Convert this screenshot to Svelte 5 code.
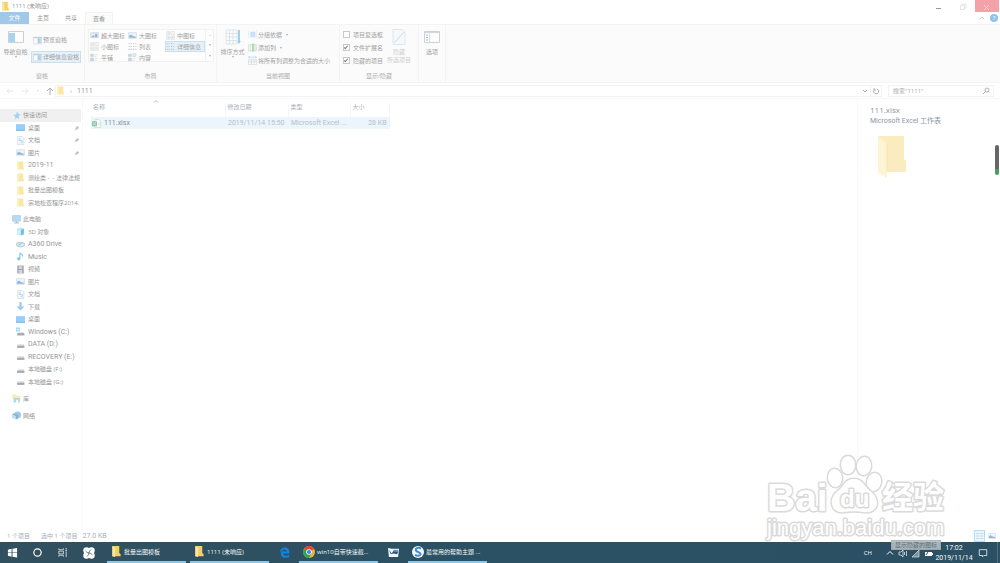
<script>
	let query = "";
	let activeTab = "查看";
	let showCheckboxes = false;
	let showExtensions = true;
	let showHidden = true;
	let selectedLayout = "详细信息";

	const tabs = ["主页", "共享", "查看"];

	const layouts = [
		{ name: "超大图标", icon: "large" },
		{ name: "大图标", icon: "photo" },
		{ name: "中图标", icon: "medium" },
		{ name: "小图标", icon: "small" },
		{ name: "列表", icon: "list" },
		{ name: "详细信息", icon: "details" },
		{ name: "平铺", icon: "tiles" },
		{ name: "内容", icon: "content" },
	];

	const quickAccess = [
		{ name: "桌面", icon: "desktop", pinned: true },
		{ name: "文档", icon: "doc", pinned: true },
		{ name: "图片", icon: "photo", pinned: true },
		{ name: "2019-11", icon: "folder", latin: true },
		{ name: "测绘类 -  - 法律法规", icon: "folder" },
		{ name: "批量出图模板", icon: "folder" },
		{ name: "宗地检查程序2014.", icon: "folder" },
	];

	const thisPc = [
		{ name: "3D 对象", icon: "cube" },
		{ name: "A360 Drive", icon: "cloud", latin: true },
		{ name: "Music", icon: "music", latin: true },
		{ name: "视频", icon: "video" },
		{ name: "图片", icon: "photo" },
		{ name: "文档", icon: "doc" },
		{ name: "下载", icon: "download" },
		{ name: "桌面", icon: "desktop" },
		{ name: "Windows (C:)", icon: "system", latin: true },
		{ name: "DATA (D:)", icon: "drive", latin: true },
		{ name: "RECOVERY (E:)", icon: "drive", latin: true },
		{ name: "本地磁盘 (F:)", icon: "drive" },
		{ name: "本地磁盘 (G:)", icon: "drive" },
	];
</script>

{#snippet icon(name)}
	<svg class="icon" viewBox="0 0 16 16" aria-hidden="true">
		{#if name === "folder"}
			<path d="M2 1h10l1 1v9l1 1v3H2z" fill="#fbe6a6" />
			<path d="M2 1l3 2v13l-3-1z" fill="#fdf0c4" />
		{:else if name === "folderStrong"}
			<path d="M2 0h10v10l2 2v3H2z" fill="#f5cf62" />
			<path d="M2 0l4 3v13l-4-1z" fill="#ffe9a0" />
		{:else if name === "star"}
			<path d="M9 1l2 4 4 1-3 3 1 5-4-2-4 3 1-5-4-3 5-1z" fill="#a3d3f5" />
		{:else if name === "desktop"}
			<path d="M0 2h16v12H0z" fill="#96d0f8" />
			<path d="M0 12h16v2H0z" fill="#7fbfec" />
		{:else if name === "doc"}
			<path d="M3 1h8l3 3v11H3z" fill="#f6fafd" stroke="#c3ced6" />
			<path d="M5 5h4M5 8h6v4H8" fill="none" stroke="#a5cdec" stroke-width="1.5" />
		{:else if name === "photo"}
			<path d="M1 3h14v10H1z" fill="#eef6fc" stroke="#c6d2dc" />
			<path d="M2 12V9l3-3 4 3 5 1v2z" fill="#8fb8d8" />
		{:else if name === "pc"}
			<path d="M1 1h14v10H1z" fill="#b4dcf7" stroke="#9dbfd4" />
			<path d="M4 14h8M8 11v3" stroke="#afc2cf" stroke-width="2" />
		{:else if name === "cube"}
			<path d="M2 3l7-2 5 2v10l-5 2-7-2z" fill="#b9eaf5" />
			<path d="M9 5l5-2v10l-5 2z" fill="#72bfdf" />
			<path d="M4 6h3v5H4z" fill="#e7fafd" />
		{:else if name === "cloud"}
			<ellipse cx="8" cy="8" rx="7" ry="4" fill="#e9f1f5" stroke="#bccbd5" stroke-width="2" />
			<path d="M4 9c2-4 6-4 8-1-3-1-5 0-6 2z" fill="#8bc3df" />
		{:else if name === "music"}
			<path d="M7 1v9M7 1c1 3 5 3 5 7" stroke="#86c7f3" stroke-width="2" fill="none" />
			<ellipse cx="5" cy="12" rx="3" ry="3" fill="#86c7f3" />
		{:else if name === "video"}
			<path d="M2 1h12v14H2z" fill="#a4a4a8" />
			<path d="M5 2h6v5H5zM5 9h6v5H5z" fill="#cfd7ea" />
			<path d="M3 2v12M13 2v12" stroke="#eee" stroke-dasharray="1 1" />
		{:else if name === "download"}
			<path d="M6 0h4v8h5l-7 7-7-7h5z" fill="#9ccaf0" />
		{:else if name === "system"}
			<path d="M0 1h3v3H0zM4 1h3v3H4zM0 5h3v3H0zM4 5h3v3H4z" fill="#93d5f2" />
			<path d="M3 10h11l1 2v3H2v-3z" fill="#a9adb0" />
		{:else if name === "drive"}
			<path d="M3 7h11l1 3H2z" fill="#e3e5e6" />
			<path d="M2 10h13v4H2z" fill="#a5a8aa" />
		{:else if name === "library"}
			<path d="M1 1h5l1 2h8v6H1z" fill="#fae8ae" />
			<path d="M3 7h11v8h-3v-5H7v5H3z" fill="#a6d9f3" />
		{:else if name === "network"}
			<circle cx="10" cy="7" r="6" fill="#9dcae8" />
			<path d="M0 6l7 3v6l-7-3z" fill="#bcdff4" />
			<path d="M0 6l4-2 7 3-4 2zM7 9l4-2v6l-4 2z" fill="#86b6d6" />
		{:else if name === "large"}
			<path d="M1 3h14v9H1z" fill="#e4eef6" stroke="#c5ccd2" />
			<path d="M2 11l4-4 3 3z" fill="#96b3cf" />
			<path d="M9 5h4v6H9z" fill="#90b5d7" />
		{:else if name === "medium" || name === "small"}
			<path d="M1 1h6v6H1zM9 1h6v6H9zM1 9h6v6H1zM9 9h6v6H9z" fill="#f5f5f5" stroke="#d9dbdd" />
			<path d="M3 3h2v2H3z" fill="#a9cfeb" />
			<path d="M11 11h2v2h-2z" fill={name === "medium" ? "#efa6a6" : "#c9d5df"} />
			<path d="M3 11h2v2H3z" fill={name === "medium" ? "#9ac2e1" : "#c9d5df"} />
		{:else if name === "list" || name === "details"}
			<path
				d="M1 3h2M1 8h2M1 13h2M9 3h2M9 8h2M9 13h2"
				stroke={name === "list" ? "#bfc5c9" : "#9fc5e4"}
				stroke-width="2"
			/>
			<path d="M4 3h3M4 8h3M4 13h3M12 3h3M12 8h3M12 13h3" stroke="#d2d6d9" stroke-width="2" />
		{:else if name === "tiles" || name === "content"}
			<path d="M1 2h5v4H1zM1 9h5v5H1z" fill="#c4d9e9" stroke="#c4cbd0" />
			<path d="M8 3h6M8 6h4M8 10h6M8 13h4" stroke="#c8d2da" />
			{#if name === "content"}<path d="M9 1h5v5H9z" fill="#e6f1f9" stroke="#b7d4ea" />{/if}
		{:else if name === "pane"}
			<path d="M1 2h14v12H1z" fill="#fcfcfc" stroke="#c9cdd0" />
			<path d="M8 4h6v9H8z" fill="#a9d3f3" />
			<path d="M1 3h14" stroke="#c4cacf" stroke-width="2" />
		{:else if name === "group"}
			<path d="M1 1v14M15 1v14" stroke="#ccdce8" stroke-dasharray="2 1" />
			<path d="M4 3h9v10H4z" fill="#c7e3f8" />
		{:else if name === "addColumn"}
			<path d="M1 3h14v11H1z" fill="#fbfbfb" stroke="#cacdd0" />
			<path d="M7 1h4v14H7z" fill="#a5dfa5" />
			<path d="M4 3v11M13 3v11" stroke="#d0d0d0" />
		{:else if name === "fit"}
			<path d="M1 6h14v9H1zM1 10h14M6 6v9M11 6v9" fill="#fafafa" stroke="#c9d2d9" />
			<path d="M1 2h14M3 0L1 2l2 2M13 0l2 2-2 2" fill="none" stroke="#99c6e8" />
		{/if}
	</svg>
{/snippet}

<div class="screen">
	<div class="titlebar">
		<span class="title">{@render icon("folderStrong")}1111 (未响应)</span>
		<div class="window-buttons">
			<button aria-label="最小化"><svg viewBox="0 0 10 10"><path d="M2 7.500h5" stroke="#999" /></svg></button>
			<button aria-label="还原"><svg viewBox="0 0 10 10" fill="none" stroke="#e4e4e4"><path d="M2.500 4.500h4v4h-4zM4 4V3h4v4H7" /></svg></button>
			<button class="close" aria-label="关闭"><svg viewBox="0 0 10 10"><path d="M2 4l5 5M7 4L2 9" stroke="#fbd0d3" /></svg></button>
		</div>
	</div>

	<nav class="tabs">
		<button class="file-tab">文件</button>
		{#each tabs as tab}
			<button class:active={activeTab === tab} on:click={() => (activeTab = tab)}>{tab}</button>
		{/each}
		<div class="help">
			<button aria-label="折叠功能区"><svg viewBox="0 0 8 8"><path d="M2 5l2-2 2 2" fill="none" stroke="#d4d4d4" /></svg></button>
			<button class="question" aria-label="帮助">?</button>
		</div>
	</nav>

	<div class="ribbon">
		<section class="group panes">
			<div class="tools">
				<button class="big">
					<svg class="big-icon" viewBox="0 0 16 16"><path d="M.5 2.500h15v11H.5z" fill="#fdfdfd" stroke="#ccd1d4" /><path d="M1 4h6v9H1z" fill="#a9d3f3" /></svg>
					导航窗格<i class="caret"></i>
				</button>
				<div class="stack">
					<button>{@render icon("pane")}预览窗格</button>
					<button class="on">{@render icon("pane")}详细信息窗格</button>
				</div>
			</div>
			<h2>窗格</h2>
		</section>

		<section class="group layout">
			<div class="tools">
				<div class="gallery">
					<div class="cells">
						{#each layouts as layout}
							<button
								class:on={selectedLayout === layout.name}
								on:click={() => (selectedLayout = layout.name)}
							>
								{@render icon(layout.icon)}{layout.name}
							</button>
						{/each}
					</div>
					<div class="gallery-scroll">
						<button aria-label="上移"><i class="caret up"></i></button>
						<button aria-label="下移"><i class="caret"></i></button>
						<button class="more" aria-label="其他"><i class="caret"></i></button>
					</div>
				</div>
			</div>
			<h2>布局</h2>
		</section>

		<section class="group current">
			<div class="tools">
				<button class="big">
					<svg class="big-icon" viewBox="0 0 16 16"><path d="M1 1h11v14H1zM1 4.500h11M1 8h11M1 11.500h11M4.500 1v14M8 1v14" fill="#fafcfd" stroke="#dde4e9" /><path d="M14 1v13" stroke="#a3cfee" stroke-width="2" /><path d="M12 12l2 3 2-3z" fill="#a3cfee" /></svg>
					排序方式<i class="caret"></i>
				</button>
				<div class="rows">
					<button>{@render icon("group")}分组依据<i class="caret side"></i></button>
					<button>{@render icon("addColumn")}添加列<i class="caret side"></i></button>
					<button>{@render icon("fit")}将所有列调整为合适的大小</button>
				</div>
			</div>
			<h2>当前视图</h2>
		</section>

		<section class="group visibility">
			<div class="tools">
				<div class="rows">
					<label><input type="checkbox" bind:checked={showCheckboxes} />项目复选框</label>
					<label><input type="checkbox" bind:checked={showExtensions} />文件扩展名</label>
					<label><input type="checkbox" bind:checked={showHidden} />隐藏的项目</label>
				</div>
				<button class="big faded">
					<svg class="big-icon" viewBox="0 0 16 16"><path d="M2 .5h9l3 3v12H2z" fill="#f5f9fd" stroke="#dae7f3" /><path d="M3 14L13 3" stroke="#c5dbf0" /></svg>
					隐藏<span>所选项目</span>
				</button>
			</div>
			<h2>显示/隐藏</h2>
		</section>

		<section class="group options">
			<div class="tools">
				<button class="big">
					<svg class="big-icon" viewBox="0 0 16 16"><path d="M.5 2.500h15v11H.5z" fill="#fdfdfd" stroke="#ccd1d4" /><path d="M1 3.500h14" stroke="#d3d7da" /><path d="M2 6h2M2 8.500h2M2 11h2" stroke="#8fc0e6" /><path d="M5.500 4v9" stroke="#ddd" /></svg>
					选项
				</button>
			</div>
		</section>
	</div>

	<div class="address">
		<div class="history">
			<button aria-label="后退"><svg viewBox="0 0 10 10"><path d="M8 5H2M4.500 2.500L2 5l2.500 2.500" fill="none" stroke="#e6e6e6" /></svg></button>
			<button aria-label="前进"><svg viewBox="0 0 10 10"><path d="M2 5h6M5.500 2.500L8 5 5.500 7.500" fill="none" stroke="#e6e6e6" /></svg></button>
			<button class="recent" aria-label="最近浏览的位置"><i class="caret pale"></i></button>
			<button aria-label="上移一级"><svg viewBox="0 0 10 10"><path d="M5 9V2M2 5l3-3 3 3" fill="none" stroke="#b0b0b0" /></svg></button>
		</div>
		<div class="path">
			{@render icon("folder")}
			<span class="sep">›</span>
			<a class="latin" href="#folder">1111</a>
			<button class="drop" aria-label="以前的位置"><svg viewBox="0 0 8 8"><path d="M2 3l2 2 2-2" fill="none" stroke="#b0b0b0" /></svg></button>
			<button class="refresh" aria-label="刷新"><svg viewBox="0 0 8 8"><path d="M5 2a2.500 2.500 0 1 1-3 1M2 1v2h2" fill="none" stroke="#b0b0b0" /></svg></button>
		</div>
		<div class="search">
			<input type="text" aria-label="搜索" placeholder={'搜索"1111"'} bind:value={query} />
			<svg viewBox="0 0 8 8"><circle cx="5" cy="3" r="2" fill="none" stroke="#b0b0b0" /><path d="M3.500 4.500L1 7" stroke="#b0b0b0" /></svg>
		</div>
	</div>

	<main class="body">
		<aside class="tree">
			<ul class="quick">
				<li class="root on">{@render icon("star")}快速访问</li>
				{#each quickAccess as item}
					<li>
						{@render icon(item.icon)}<span class="name" class:latin={item.latin}>{item.name}</span>
						{#if item.pinned}
							<svg class="pin" viewBox="0 0 8 8"><path d="M4 1l3 3-2 .5L4 6.500 1.500 4 3.500 3z" fill="#b4bcc2" /><path d="M3 5L1 7" stroke="#b4bcc2" /></svg>
						{/if}
					</li>
				{/each}
			</ul>
			<ul class="pc">
				<li class="root">{@render icon("pc")}此电脑</li>
				{#each thisPc as item}
					<li>{@render icon(item.icon)}<span class="name" class:latin={item.latin}>{item.name}</span></li>
				{/each}
			</ul>
			<ul class="single"><li class="root">{@render icon("library")}库</li></ul>
			<ul class="single"><li class="root">{@render icon("network")}网络</li></ul>
		</aside>

		<div class="files">
			<svg class="sort" viewBox="0 0 8 4"><path d="M2 3.500l2-2 2 2" fill="none" stroke="#bbb" /></svg>
			<table>
				<thead>
					<tr><th class="c-name">名称</th><th class="c-date">修改日期</th><th class="c-type">类型</th><th class="c-size">大小</th></tr>
				</thead>
				<tbody>
					<tr>
						<td class="file-name latin">
							<svg class="icon" viewBox="0 0 16 16"><path d="M5 1h7l3 3v11H5z" fill="#fff" stroke="#c4cdc7" /><path d="M0 4h9v9H0z" fill="#87c9a0" /><path d="M2.500 6l4 5M6.500 6l-4 5" stroke="#fff" /><path d="M11 7h3M11 10h3" stroke="#a5d5b5" /></svg>111.xlsx
						</td>
						<td class="latin">2019/11/14 15:50</td>
						<td class="latin">Microsoft Excel ...</td>
						<td class="latin size">28 KB</td>
					</tr>
				</tbody>
			</table>
		</div>

		<aside class="preview">
			<h1>111.xlsx</h1>
			<p class="latin">Microsoft Excel 工作表</p>
			<svg class="thumb" viewBox="0 0 30 44">
				<path d="M1 1h26v23l2 2v11H10z" fill="#fbecc0" />
				<path d="M1 1l9 8v34l-9-6z" fill="#fef3d2" />
				<path d="M10 9v28" stroke="#f6e3ae" />
			</svg>
		</aside>
	</main>

	<footer class="status">
		<span>1 个项目</span>
		<span>选中 1 个项目</span>
		<span class="latin">27.0 KB</span>
		<div class="views">
			<button class="on" aria-label="详细信息视图">{@render icon("details")}</button>
			<button aria-label="大图标视图">{@render icon("photo")}</button>
		</div>
	</footer>

	<div class="taskbar">
		<button class="tb" aria-label="开始"><svg viewBox="0 0 12 12"><path d="M1 3l4-1v4H1zM6 2l5-1v5H6zM1 6.500h4v4l-4-1zM6 6.500h5v5l-5-1z" fill="#fff" /></svg></button>
		<button class="tb" aria-label="Cortana"><svg viewBox="0 0 12 12"><circle cx="6" cy="6" r="4" fill="none" stroke="#fff" stroke-width="1.300" /></svg></button>
		<button class="tb" aria-label="任务视图"><svg viewBox="0 0 12 12" fill="none" stroke="#cfd9de"><path d="M2 1.500v1.500h5V1.500M2 10.500V9h5v1.500M2 4.500h5v3H2zM10 1v2M10 5v6M9 4h2" /></svg></button>
		<button class="tb wide" aria-label="浏览器">
			<svg viewBox="0 0 12 12">
				<g fill="#fff"><circle cx="3.500" cy="3.500" r="3.200" /><circle cx="8.500" cy="3.500" r="3.200" /><circle cx="3.500" cy="8.500" r="3.200" /><circle cx="8.500" cy="8.500" r="3.200" /></g>
				<path d="M6 6Q4 6 2.500 4M6 6Q6 4 8 2.500M6 6Q8 6 9.500 8M6 6Q6 8 4 9.500" fill="none" stroke="#2d5061" stroke-width=".7" />
			</svg>
		</button>
		<button class="task">{@render icon("folderStrong")}批量出图模板</button>
		<button class="task">{@render icon("folderStrong")}1111 (未响应)</button>
		<button class="tb edge" aria-label="Edge"><svg viewBox="0 0 12 12"><path d="M1 6C1 2 4 .5 6.500 .5 10 .5 11.500 3 11.500 7H4.500c.5 3 4 3 6.500 1.500v2.500C6 13 2 11 2 7.500 2 5 4 3.500 5.500 3 4.700 3.700 4.500 4.500 4.500 5h4C8 1.500 3 2 1 6z" fill="#1583dc" /></svg></button>
		<button class="task">
			<svg class="app" viewBox="0 0 12 12"><circle cx="6" cy="6" r="6" fill="#e8b92f" /><path d="M6 6L.8 3A6 6 0 0 1 11.200 3z" fill="#df4738" /><path d="M6 6L.8 3A6 6 0 0 0 6 12l2.500-5z" fill="#32a35a" /><circle cx="6" cy="6" r="2.800" fill="#fff" /><circle cx="6" cy="6" r="2.100" fill="#4483ea" /></svg>
			win10自带快速截...
		</button>
		<button class="tb mid" aria-label="办公助手"><svg viewBox="0 0 12 12"><path d="M0 1l4 1h8l-1 9H1z" fill="#f3f6f8" /><path d="M1 3l3 4 2-3 5 1-1 3-4-1-3 1z" fill="#31556c" /><path d="M6 3h5v2H6z" fill="#56a0da" /></svg></button>
		<button class="task">
			<svg class="app" viewBox="0 0 12 12"><circle cx="6" cy="6" r="6" fill="#f5f9fc" /><path d="M9 2.500C6 1 3 2.500 4 4.500s5 1.500 4.500 4C8 10 5 10 3 9" fill="none" stroke="#3a90d8" stroke-width="2" /></svg>
			最常用的帮助主题 ...
		</button>

		<div class="tray">
			<button class="lang">CH</button>
			<button class="tray-icon" aria-label="显示隐藏的图标"><svg viewBox="0 0 10 10"><path d="M2 6.500l3-3 3 3" fill="none" stroke="#fff" /></svg></button>
			<button class="tray-icon" aria-label="音量"><svg viewBox="0 0 10 10"><path d="M1 4h2l2-2v7L3 7H1z" fill="none" stroke="#dfe6e9" stroke-width=".8" /><path d="M6.500 4v3M8.500 3v5" stroke="#dfe6e9" stroke-width=".8" /></svg></button>
			<button class="tray-icon" aria-label="网络"><svg viewBox="0 0 10 10"><path d="M1 9l7-7v7z" fill="#7e929d" stroke="#c9d3d8" stroke-width=".8" /></svg></button>
			<button class="tray-icon" aria-label="电池"><svg viewBox="0 0 10 10"><path d="M1 4h7v4H1z" fill="#fff" /><path d="M8 5h1v2H8z" fill="#fff" /><path d="M2 7l2-3" stroke="#2d5061" /></svg></button>
			<div class="clock latin"><span>17:02</span><span>2019/11/14</span></div>
			<button class="notice" aria-label="通知"><svg viewBox="0 0 12 12"><path d="M1.500 2h9v7H7L5.500 10.500V9h-4z" fill="none" stroke="#e8eef1" /></svg></button>
			<div class="tooltip" role="tooltip">显示隐藏的图标</div>
		</div>
	</div>

	<div class="side-handle"></div>

	<svg class="watermark" viewBox="0 0 184 88">
		<g class="outline">
			<text x="3" y="57" class="brand">Bai</text>
			<ellipse cx="71" cy="24" rx="7" ry="9" transform="rotate(-8 71 24)" />
			<ellipse cx="84" cy="11" rx="7" ry="9" />
			<ellipse cx="100" cy="12" rx="7" ry="9" transform="rotate(8 100 12)" />
			<ellipse cx="110" cy="28" rx="7" ry="9" transform="rotate(12 110 28)" />
			<path d="M90 25c-9 0-10 7-15 11-5 4-8 8-7 14 1 6 6 9 12 8 6-1 14-1 20 0 7 1 12-2 13-8 0-6-3-10-8-14-5-4-6-11-15-11z" />
			<text x="76" y="53" class="du">du</text>
			<text x="118" y="54" class="cjk">经验</text>
			<text x="3" y="81" class="url">jingyan.baidu.com</text>
		</g>
	</svg>
</div>

<style>
	:global(body) {
		margin: 0;
		background: #fff;
	}

	.screen {
		position: relative;
		display: flex;
		flex-direction: column;
		min-height: 100vh;
		overflow: hidden;
		font: 6px/8px "Open Sans", "Noto Sans CJK SC", sans-serif;
		color: #969696;
	}

	.latin {
		font-family: Roboto, "Noto Sans CJK SC", sans-serif;
		font-size: 7px;
	}

	button {
		display: flex;
		align-items: center;
		padding: 0;
		border: 0;
		background: none;
		color: inherit;
		font: inherit;
		white-space: nowrap;
	}

	h1,
	h2,
	p,
	ul {
		margin: 0;
		padding: 0;
		font-weight: normal;
		list-style: none;
	}

	svg {
		display: block;
		flex: none;
	}

	.icon {
		width: 9px;
		height: 9px;
	}

	.caret {
		border: 1px solid transparent;
		border-top: 2px solid #aaa;
		border-bottom: 0;
	}

	.caret.up {
		border-top: 0;
		border-bottom: 2px solid #ddd;
	}

	.caret.pale {
		border-top-color: #ddd;
	}

	.caret.side {
		margin-left: 3px;
	}

	.titlebar {
		display: flex;
		justify-content: space-between;
		height: 12px;
	}

	.title {
		display: flex;
		align-items: center;
		gap: 2px;
		padding-left: 1px;
	}

	.window-buttons {
		display: flex;
	}

	.window-buttons button {
		justify-content: center;
		width: 24px;
	}

	.window-buttons svg {
		width: 10px;
		height: 10px;
	}

	.window-buttons .close {
		background: #f5a1a8;
		margin-right: 1px;
	}

	.tabs {
		display: flex;
		height: 12px;
	}

	.tabs > button {
		justify-content: center;
		box-sizing: border-box;
		width: 28px;
	}

	.tabs > .file-tab {
		width: 29px;
		background: #a0c8e9;
		color: #fff;
	}

	.tabs > .active {
		border: 1px solid #f2f2f2;
		border-bottom: 0;
		background: #fbfbfb;
	}

	.help {
		display: flex;
		align-items: center;
		gap: 4px;
		margin-left: auto;
		padding-right: 2px;
	}

	.help svg {
		width: 8px;
		height: 8px;
	}

	.question {
		justify-content: center;
		width: 8px;
		height: 8px;
		border-radius: 50%;
		background: #8dc3ee;
		color: #fff;
	}

	.ribbon {
		display: flex;
		height: 57px;
		border-top: 1px solid #f3f3f3;
		border-bottom: 1px solid #f5f5f5;
		background: #fbfbfb;
		color: #9f9f9f;
	}

	.group {
		display: flex;
		flex-direction: column;
		box-sizing: border-box;
		border-right: 1px solid #f3f3f3;
	}

	.tools {
		display: flex;
		flex: 1;
		padding-top: 4px;
	}

	.group h2 {
		padding-bottom: 2px;
		font-size: 6px;
		text-align: center;
		color: #ababab;
	}

	.panes {
		width: 85px;
	}

	.layout {
		width: 132px;
	}

	.current {
		width: 123px;
	}

	.visibility {
		width: 79px;
	}

	.options {
		width: 27px;
	}

	.big {
		flex-direction: column;
		align-self: flex-start;
	}

	.big-icon {
		width: 16px;
		height: 16px;
		margin-bottom: 3px;
	}

	.panes .big,
	.current .big {
		width: 31px;
	}

	.options .big {
		width: 26px;
	}

	.visibility .big {
		width: 32px;
	}

	.big.faded {
		color: #cdcdcd;
	}

	.stack {
		display: flex;
		flex-direction: column;
		gap: 5px;
		padding-top: 5px;
	}

	.stack button {
		gap: 1px;
		height: 12px;
		box-sizing: border-box;
		padding: 0 1px;
		border: 1px solid transparent;
	}

	.stack .on,
	.cells .on {
		border-color: #c9e0f2;
		background: #e6f1fa;
	}

	.gallery {
		display: flex;
		align-self: flex-start;
		box-sizing: border-box;
		height: 33px;
		margin-left: 3px;
		border: 1px solid #f1f1f1;
		background: #fdfdfd;
	}

	.cells {
		display: grid;
		grid-template-columns: 38px 38px 40px;
		grid-auto-rows: 11px;
	}

	.cells button {
		gap: 2px;
		border: 1px solid transparent;
	}

	.gallery-scroll {
		display: flex;
		flex-direction: column;
		width: 7px;
		border-left: 1px solid #f1f1f1;
	}

	.gallery-scroll button {
		flex: 1;
		justify-content: center;
	}

	.rows {
		display: flex;
		flex-direction: column;
		gap: 4px;
		padding-top: 1px;
	}

	.rows button,
	.rows label {
		display: flex;
		align-items: center;
		gap: 1px;
		height: 9px;
		white-space: nowrap;
	}

	.visibility .rows {
		padding-left: 3px;
	}

	.rows label {
		gap: 3px;
	}

	.rows input {
		appearance: none;
		position: relative;
		box-sizing: border-box;
		width: 7px;
		height: 7px;
		margin: 0;
		border: 1px solid #c9c9c9;
		background: #fff;
	}

	.rows input:checked::after {
		content: "";
		position: absolute;
		top: 0;
		left: 1px;
		width: 1px;
		height: 3px;
		border: solid #777;
		border-width: 0 1px 1px 0;
		transform: rotate(40deg);
	}

	.address {
		display: flex;
		align-items: center;
		height: 15px;
		padding-right: 6px;
		border-bottom: 1px solid #f8f8f8;
	}

	.history {
		display: flex;
		align-items: center;
		gap: 5px;
		width: 55px;
		box-sizing: border-box;
		padding-left: 5px;
	}

	.history svg {
		width: 10px;
		height: 10px;
	}

	.recent {
		justify-content: center;
		width: 5px;
	}

	.path,
	.search {
		display: flex;
		align-items: center;
		box-sizing: border-box;
		height: 12px;
		border: 1px solid #f2f2f2;
	}

	.path {
		flex: 1;
	}

	.sep {
		width: 12px;
		text-align: center;
	}

	.path a {
		color: inherit;
		text-decoration: none;
	}

	.path svg:not(.icon),
	.search svg {
		width: 8px;
		height: 8px;
	}

	.drop {
		margin-left: auto;
		height: 100%;
		padding-right: 1px;
		border-right: 1px solid #f2f2f2;
	}

	.refresh {
		padding: 0 1px;
	}

	.search {
		width: 106px;
		margin-left: 6px;
		padding-right: 3px;
	}

	.search input {
		flex: 1;
		min-width: 0;
		padding: 0 0 0 4px;
		border: 0;
		background: none;
		color: #aaa;
		font: inherit;
	}

	.search input::placeholder {
		color: #aaa;
	}

	.body {
		display: flex;
		flex: 1;
	}

	.tree {
		display: flex;
		flex-direction: column;
		gap: 4px;
		width: 82px;
		padding-top: 10px;
		border-right: 1px solid #f9f9f9;
	}

	.tree ul {
		display: grid;
		grid-auto-rows: 1fr;
	}

	.quick {
		height: 100px;
	}

	.pc {
		height: 175px;
	}

	.single {
		height: 13px;
	}

	.tree li {
		display: flex;
		align-items: center;
		gap: 3px;
		padding-left: 16px;
		white-space: pre;
		overflow: hidden;
	}

	.tree .root {
		gap: 2px;
		padding-left: 12px;
	}

	.tree .on {
		margin-right: 1px;
		background: #f0f0f0;
	}

	.name {
		flex: 1;
	}

	.pin {
		width: 6px;
		height: 6px;
		margin-right: 2px;
	}

	.files {
		flex: 1;
		padding-left: 8px;
	}

	.sort {
		width: 8px;
		height: 4px;
		margin-left: 61px;
	}

	table {
		width: 299px;
		border-collapse: collapse;
		table-layout: fixed;
	}

	th,
	td {
		box-sizing: border-box;
		padding: 0 0 0 3px;
		white-space: nowrap;
		text-align: left;
		font-weight: normal;
		color: #b9bfc7;
	}

	th {
		height: 14px;
		padding-left: 2px;
		border-right: 1px solid #f5f5f5;
		vertical-align: top;
		color: #a9b0ba;
	}

	td {
		height: 12px;
		background: #eaf5fd;
	}

	.c-name {
		width: 134px;
	}

	.c-date {
		width: 63px;
	}

	.c-type {
		width: 62px;
	}

	td.file-name {
		display: flex;
		align-items: center;
		gap: 3px;
		padding-left: 1px;
		color: #8f8f8f;
	}

	td.size {
		padding-right: 3px;
		text-align: right;
	}

	.preview {
		box-sizing: border-box;
		width: 143px;
		padding: 5px 0 0 12px;
		border-left: 1px solid #fafafa;
		color: #8c98a8;
	}

	.preview h1 {
		font-size: 8px;
		line-height: 12px;
	}

	.preview p {
		line-height: 10px;
	}

	.thumb {
		width: 30px;
		height: 44px;
		margin: 9px 0 0 7px;
	}

	.status {
		display: flex;
		align-items: center;
		gap: 5px;
		height: 12px;
		padding: 0 3px 0 7px;
		color: #a5afbd;
	}

	.status span:first-child {
		margin-right: 6px;
	}

	.views {
		display: flex;
		gap: 1px;
		margin-left: auto;
	}

	.views button {
		justify-content: center;
		box-sizing: border-box;
		width: 11px;
		height: 12px;
	}

	.views .on {
		border: 1px solid #b5def3;
		background: #e8f6fd;
	}

	.views .icon {
		width: 8px;
		height: 8px;
	}

	.taskbar {
		display: flex;
		height: 21px;
		background: linear-gradient(90deg, #31505f, #2a5164 50%, #2c5063);
		color: #f4f7f8;
	}

	.tb {
		justify-content: center;
		width: 25px;
	}

	.tb svg {
		width: 11px;
		height: 11px;
	}

	.tb.wide {
		box-sizing: border-box;
		width: 32px;
		padding-right: 4px;
	}

	.tb.wide svg {
		width: 12px;
		height: 12px;
	}

	.tb.edge,
	.tb.mid {
		width: 30px;
	}

	.task {
		box-sizing: border-box;
		gap: 2px;
		width: 79px;
		padding-left: 4px;
		border-bottom: 2px solid #8fc6e6;
	}

	.task + .task {
		margin-left: 4px;
	}

	.task .icon {
		width: 11px;
		height: 11px;
	}

	.app {
		width: 12px;
		height: 12px;
	}

	.tray {
		position: relative;
		display: flex;
		align-items: center;
		margin-left: auto;
		margin-right: 2px;
		padding-right: 4px;
		border-right: 1px solid #527080;
	}

	.lang {
		margin-right: 11px;
	}

	.tray-icon {
		justify-content: center;
		width: 13px;
	}

	.tray svg {
		width: 10px;
		height: 10px;
	}

	.clock {
		display: flex;
		flex-direction: column;
		align-items: center;
		gap: 2px;
		width: 38px;
	}

	.notice {
		justify-content: center;
		width: 20px;
	}

	.tooltip {
		position: absolute;
		top: -2px;
		right: 56px;
		padding: 0 3px;
		border: 1px solid #a5b0b5;
		background: #b5bfc3;
		color: #64727a;
		line-height: 8px;
		white-space: nowrap;
		opacity: 0.9;
	}

	.side-handle {
		position: absolute;
		top: 145px;
		right: 1px;
		width: 4px;
		height: 30px;
		border-radius: 2px;
		background: linear-gradient(#666 80%, #4b9b5c 80%);
	}

	.watermark {
		position: absolute;
		right: 52px;
		bottom: 21px;
		width: 184px;
		height: 88px;
		pointer-events: none;
	}

	.outline {
		fill: #fff;
		stroke: #dadada;
		stroke-width: 3px;
		stroke-linejoin: round;
		paint-order: stroke;
		font-family: "Liberation Sans", sans-serif;
	}

	.brand {
		font-size: 39px;
		font-weight: bold;
	}

	.du {
		font-size: 24px;
		font-weight: bold;
	}

	.cjk {
		font-family: "Noto Sans CJK SC", sans-serif;
		font-size: 31px;
		font-weight: bold;
	}

	.url {
		font-size: 22px;
	}
</style>
